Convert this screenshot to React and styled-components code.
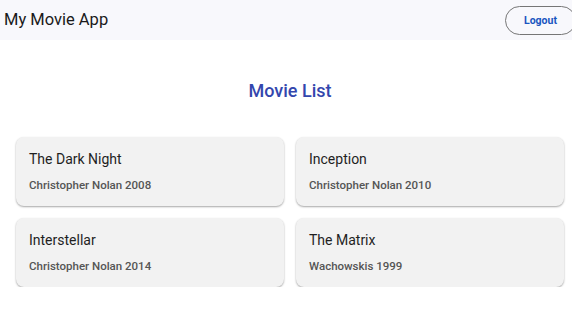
import React from "react";
import styled, { createGlobalStyle } from "styled-components";

const GlobalStyle = createGlobalStyle`
  body {
    margin: 0;
    background: #ffffff;
    font-family: Roboto, "Liberation Sans", Arial, sans-serif;
    overflow: hidden;
  }
`;

const movies = [
  { title: "The Dark Night", director: "Christopher Nolan", year: 2008 },
  { title: "Inception", director: "Christopher Nolan", year: 2010 },
  { title: "Interstellar", director: "Christopher Nolan", year: 2014 },
  { title: "The Matrix", director: "Wachowskis", year: 1999 },
];

export default function App() {
  return (
    <Page>
      <GlobalStyle />
      <TopBar>
        <AppTitle>My Movie App</AppTitle>
        <LogoutButton>Logout</LogoutButton>
      </TopBar>
      <Main>
        <Heading>Movie List</Heading>
        <Grid>
          {movies.map((m) => (
            <Card key={m.title}>
              <CardTitle>{m.title}</CardTitle>
              <CardMeta>
                {m.director} {m.year}
              </CardMeta>
            </Card>
          ))}
        </Grid>
      </Main>
    </Page>
  );
}

const Page = styled.div`
  width: 572px;
`;

const TopBar = styled.header`
  display: flex;
  align-items: center;
  justify-content: space-between;
  height: 40px;
  padding: 0 0 6px 4px;
  box-sizing: border-box;
  background: #f8f8fc;
  overflow: hidden;
`;

const AppTitle = styled.div`
  font-size: 16.5px;
  color: #1a1a1a;
  margin-top: 4px;
`;

const LogoutButton = styled.button`
  flex: none;
  width: 71px;
  height: 29px;
  margin-right: -4px;
  margin-top: 6px;
  border: 1px solid #767676;
  border-radius: 15px;
  background: transparent;
  color: #1a55c0;
  font-family: Roboto, "Liberation Sans", Arial, sans-serif;
  font-size: 10.5px;
  font-weight: 700;
  padding: 0;
`;

const Main = styled.main`
  padding: 40px 8px 0 16px;
`;

const Heading = styled.h2`
  margin: 0 0 36px;
  text-align: center;
  font-size: 18px;
  line-height: 21px;
  font-weight: 500;
  color: #3346ad;
`;

const Grid = styled.div`
  display: grid;
  grid-template-columns: 1fr 1fr;
  gap: 12px;
`;

const Card = styled.div`
  height: 69px;
  box-sizing: border-box;
  padding: 13px 12px 0 13px;
  background: #f2f2f2;
  border-radius: 8px;
  box-shadow: 0 1px 2px rgba(0, 0, 0, 0.35);
`;

const CardTitle = styled.div`
  font-size: 14px;
  line-height: 18px;
  color: #1f1f1f;
`;

const CardMeta = styled.div`
  margin-top: 10px;
  font-size: 11.5px;
  font-weight: 500;
  color: #555555;
`;
